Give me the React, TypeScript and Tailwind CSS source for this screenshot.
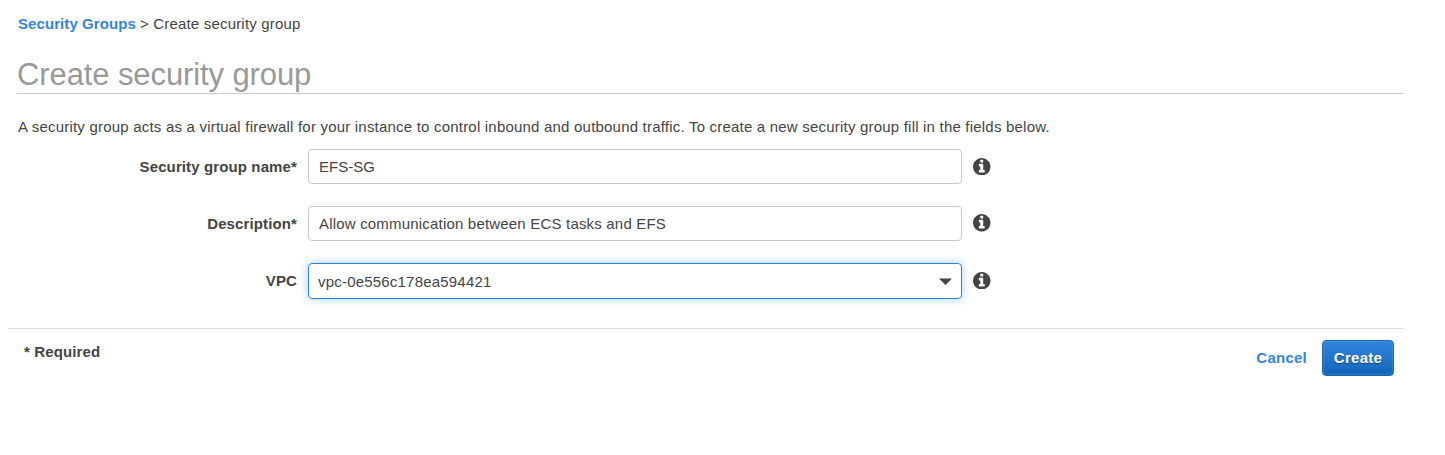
import type { ReactNode } from "react";

function InfoIcon() {
  return (
    <svg viewBox="128 128 1536 1536" className="ml-[11px] size-[17.5px] shrink-0 fill-[#444]" aria-hidden="true">
      <path d="M1152 1376v-160q0-14-9-23t-23-9h-96v-512q0-14-9-23t-23-9h-320q-14 0-23 9t-9 23v160q0 14 9 23t23 9h96v320h-96q-14 0-23 9t-9 23v160q0 14 9 23t23 9h448q14 0 23-9t9-23zm-128-896v-160q0-14-9-23t-23-9h-192q-14 0-23 9t-9 23v160q0 14 9 23t23 9h192q14 0 23-9t9-23zm640 416q0 209-103 385.5t-279.5 279.5-385.5 103-385.5-103-279.5-279.5-103-385.5 103-385.5 279.5-279.5 385.5-103 385.5 103 279.5 279.5 103 385.5z" />
    </svg>
  );
}

function Row({ label, iconClass, children }: { label: ReactNode; iconClass: string; children: ReactNode }) {
  return (
    <div className="flex items-center">
      <div className="mr-[11px] w-[279px] text-right font-bold tracking-[0.12px]">{label}</div>
      {children}
      <div className={iconClass}>
        <InfoIcon />
      </div>
    </div>
  );
}

export default function App() {
  return (
    <div className="h-[455px] w-[1445px] bg-white pt-[14px] font-['Liberation_Sans',Arial,sans-serif] text-[15px] leading-5 text-[#444]">
      <div className="ml-[18px] flex gap-1">
        <a className="font-bold tracking-[0.08px] text-[#3384dd]">Security Groups</a>
        <span className="tracking-[0.19px]">&gt; Create security group</span>
      </div>
      <h1 className="mr-[41px] ml-[17px] mt-[21px] h-[39px] border-b border-[#c8c8c8] text-[31px] leading-[40px] tracking-[-0.1px] text-[#999]">
        Create security group
      </h1>
      <p className="ml-[18px] mt-[23px] tracking-[0.205px]">
        A security group acts as a virtual firewall for your instance to control inbound and outbound traffic. To create a new security group fill in the fields below.
      </p>
      <form className="ml-[18px] mt-3 flex flex-col gap-[22px]">
        <Row label="Security group name*" iconClass="">
          <div className="flex h-[35px] w-[654px] items-center rounded-[4px] border border-[#c8c8c8] px-[10px]">EFS-SG</div>
        </Row>
        <Row label="Description*" iconClass="pb-px">
          <div className="flex h-[35px] w-[654px] items-center rounded-[4px] border border-[#c8c8c8] px-[10px] tracking-[0.19px]">
            Allow communication between ECS tasks and EFS
          </div>
        </Row>
        <Row label="VPC" iconClass="pb-px">
          <div className="flex h-9 w-[654px] items-center justify-between rounded-[4px] border border-[#2a84dc] px-[9px] shadow-[0_0_10px_rgba(42,132,220,0.4)]">
            <span className="pt-[2px] tracking-[0.2px]">vpc-0e556c178ea594421</span>
            <svg viewBox="0 0 13 7" className="mt-px h-[7px] w-[13px] fill-[#444]" aria-hidden="true">
              <path d="M0 0.5h13L6.5 7z" />
            </svg>
          </div>
        </Row>
      </form>
      <footer className="mr-[41px] ml-2 mt-[29px] flex items-start justify-between border-t border-[#ddd] pr-[10px] pl-4 font-bold">
        <span className="mt-[13px] tracking-[0.12px]">* Required</span>
        <div className="mt-[11px] flex items-center gap-[15px]">
          <a className="tracking-[0.25px] text-[#3384dd]">Cancel</a>
          <button className="h-9 w-[72px] rounded-[4px] border border-[#1766b5] bg-linear-to-b from-[#2f85dc] to-[#1465b9] tracking-[0.3px] text-white inset-shadow-[0_0_1px_1px_rgba(255,255,255,0.12)] [text-shadow:0_1px_1px_rgba(0,0,0,0.4)]">Create</button>
        </div>
      </footer>
    </div>
  );
}
